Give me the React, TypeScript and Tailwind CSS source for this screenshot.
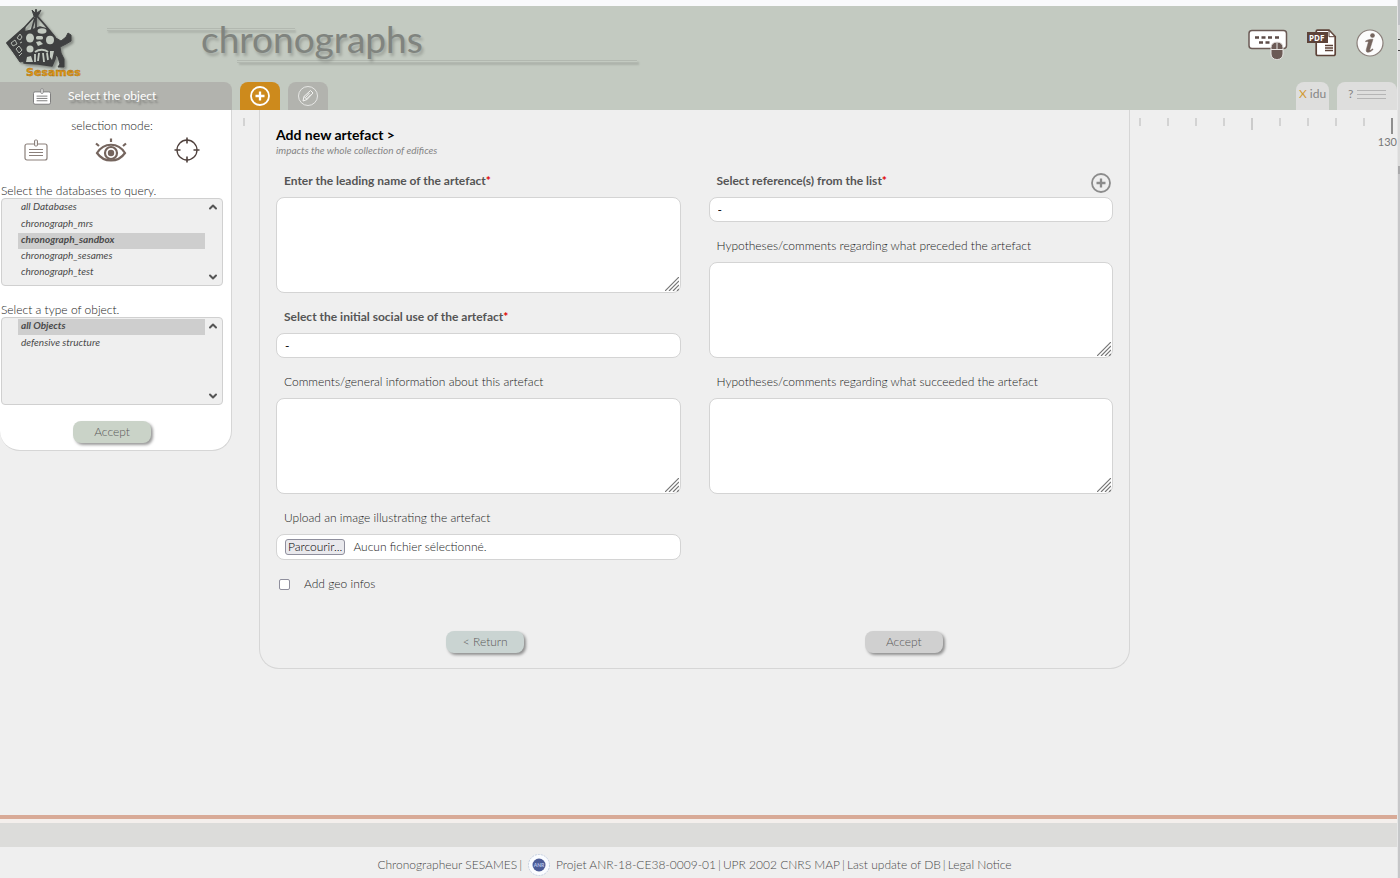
import { useState } from 'react';
import type { ReactNode } from 'react';
import { ChevronDown, ChevronUp } from 'lucide-react';
import clsx from 'clsx';

const DATABASES = [
  'all Databases',
  'chronograph_mrs',
  'chronograph_sandbox',
  'chronograph_sesames',
  'chronograph_test',
];

const OBJECT_TYPES = ['all Objects', 'defensive structure'];

const TICKS = ['minor', 'minor', 'minor', 'minor', 'medium', 'minor', 'minor', 'minor', 'minor', 'major'];

/* ---------- Icons ---------- */

function SesamesLogo() {
  return (
    <svg width="84" height="72" viewBox="0 0 84 72" role="img" aria-label="Sesames">
      <g className="drop-shadow-[2px_2px_1px_rgba(0,0,0,0.3)]" stroke="#3f4041" strokeLinejoin="round">
        {/* knot and tent poles */}
        <path d="M32 2l3 3 1-4 1 4 4-3-2 4-2 3-3-1z" fill="#3f4041" strokeWidth="1" />
        <path d="M35 8L24 20 7 35l14 18M37 8l8 9 9 11M36 8v14M35 10l-4 14" fill="none" strokeWidth="1.800" />
        {/* lattice on the left side */}
        <path d="M25 19l-1 34-4 1L7 35z" fill="#3f4041" strokeWidth="1" />
        {/* stone body */}
        <path d="M24 24l8-2 8-3 7 2 8 8 2 10-2 12-3 7-14-2-14-1z" fill="#3f4041" strokeWidth="1.500" />
        {/* arm and leg */}
        <path
          d="M54 29l7 4 5-4 2-4 3 2v6l-5 3-6 3 1 6 3 6v8h-6l2-3-2-7-6-6z"
          fill="#3f4041"
          strokeWidth="1"
        />
        <g fill="#c3cac1" stroke="none">
          <ellipse cx="42" cy="23" rx="4.500" ry="2.800" />
          <ellipse cx="30" cy="30" rx="4" ry="4.500" />
          <rect x="36" y="28" width="7" height="3.500" rx="1.500" />
          <path d="M36 34l4-1 3 3-5 2z" />
          <ellipse cx="50" cy="32" rx="4" ry="4.200" />
          <ellipse cx="30" cy="41" rx="3.500" ry="3.500" />
          <path d="M26 54l1-5 4-1 2 6zM50 43l4 0-2 9-2-3z" />
        </g>
        <path
          d="M35 44c4-3 10-3 13 0M35 46v8M39 45l-1 8M43 45l1 9M47 45l1 7"
          fill="none"
          stroke="#c3cac1"
          strokeWidth="1.800"
        />
        <path
          d="M11 35l4-3 2 4-4 2zM17 30l3-4 2 3-2 3zM16 41l3-3 3 4-3 3zM19 48l3-3M20 35l2-1"
          fill="none"
          stroke="#b4bab2"
          strokeWidth="1"
        />
      </g>
      <text
        x="26"
        y="68"
        fill="#e09a17"
        stroke="#a8690c"
        strokeWidth="0.4"
        className="font-['DejaVu_Sans'] text-[11px] font-bold"
      >
        Sesames
      </text>
    </svg>
  );
}

function NoteIcon({ className, fill = 'none' }: { className?: string; fill?: string }) {
  return (
    <svg className={className} viewBox="0 0 24 22" fill="none" stroke="currentColor">
      <rect x="1" y="5" width="22" height="16" rx="2" fill={fill} strokeWidth="1.2" />
      <rect x="10.5" y="1" width="3" height="6" rx="1" fill="#efefef" strokeWidth="1" />
      <path d="M5 10.5h14M5 13.5h14M5 16.5h14" strokeWidth="1.2" />
    </svg>
  );
}

function EyeIcon() {
  return (
    <svg className="h-6 w-8" viewBox="0 0 32 24" fill="none" stroke="#75655e" strokeWidth="2.200">
      <path d="M2 15c7-11 21-11 28 0-7 10-21 10-28 0z" />
      <circle cx="16" cy="15" r="6" />
      <circle cx="16" cy="15" r="3.200" fill="#75655e" stroke="none" />
      <path d="M16 4V0.5M4 8L1 5.5M28 8l3-2.5" />
    </svg>
  );
}

function TargetIcon() {
  return (
    <svg className="size-6.5" viewBox="0 0 26 26" fill="none" stroke="#4f413d" strokeWidth="1.3">
      <circle cx="13" cy="13" r="10" />
      <path d="M13 0.5v6M13 19.5v6M0.5 13h6M19.5 13h6" strokeWidth="1.600" />
    </svg>
  );
}

function KeyboardMouseIcon() {
  return (
    <svg width="40" height="31" viewBox="0 0 40 31">
      <rect x="1" y="1.5" width="37.500" height="18" rx="3" fill="#fff" stroke="#6b5a55" strokeWidth="1.5" />
      <path
        d="M7 8.500h4M13.500 8.500h4M20 8.500h4M27 8.500h4M11 13.500h4M17.500 13.500h4"
        stroke="#5d4c48"
        strokeWidth="2.400"
      />
      <rect x="23" y="13" width="12" height="17.500" rx="5.500" fill="#6b5a55" stroke="#e8e6e4" strokeWidth="1" />
      <path d="M23 20.500h12M29 13v7.500" stroke="#e8e6e4" strokeWidth="1" />
    </svg>
  );
}

function PdfIcon() {
  return (
    <svg width="30" height="28" viewBox="0 0 30 28">
      <path
        d="M10.500 1.200H22l6.200 6.500V25a1.500 1.500 0 0 1-1.500 1.500h-16A1.500 1.500 0 0 1 9.200 25V2.500a1.300 1.300 0 0 1 1.300-1.300z"
        fill="#fff"
        stroke="#5d4339"
        strokeWidth="1.700"
      />
      <path d="M22 1.500v6.200h6z" fill="#fff" stroke="#5d4339" strokeWidth="1" />
      <path d="M18 16.500h8M18 19h8M18 21.500h8" stroke="#5d4339" strokeWidth="1.300" />
      <rect x="0" y="3" width="21" height="11" fill="#5d4339" />
      <text x="2" y="11.500" fill="#fff" className="font-['Open_Sans'] text-[8px] font-bold">
        PDF
      </text>
    </svg>
  );
}

function InfoIcon() {
  return (
    <svg width="28" height="28" viewBox="0 0 28 28">
      <circle cx="14" cy="14" r="13" fill="#fcfcfc" stroke="#8a7f7a" strokeWidth="1.200" />
      <circle cx="16.500" cy="6.500" r="2.300" fill="#75655e" />
      <path
        d="M9.500 12c2.500-1.500 5-1.800 7.500-1.800l-3.200 10.300c-.3 1.200.5 1.200 2.700-.7l.6.800c-3 3.200-7.800 3.800-6.800-.2l2-7.200c.2-1-.8-1-2.500-.4z"
        fill="#75655e"
        stroke="#75655e"
        strokeWidth="0.500"
      />
    </svg>
  );
}

function CirclePlus({ className, weight }: { className?: string; weight: number }) {
  return (
    <svg className={className} viewBox="0 0 20 20" fill="none" stroke="currentColor" strokeWidth={weight}>
      <circle cx="10" cy="10" r="9" />
      <path d="M10 5.500v9M5.500 10h9" strokeWidth={weight + 0.5} />
    </svg>
  );
}

function PencilCircle() {
  return (
    <svg className="size-5" viewBox="0 0 20 20" fill="none" stroke="#f4f4f2" strokeWidth="1">
      <circle cx="10" cy="10" r="9.500" strokeWidth="0.800" />
      <path d="M5 15l1-4.500L12.500 4.500l2.500 2.500-6 6.500zM6 10.500l3 3M11.500 7l-4 4.500M13 8.500l-4.500 4.500" />
    </svg>
  );
}

function AnrLogo() {
  return (
    <svg width="22" height="24" viewBox="0 0 22 24" role="img" aria-label="ANR">
      <circle cx="11" cy="12" r="10.500" fill="#fafcff" stroke="#b9c6dc" strokeWidth="0.800" strokeDasharray="2 1" />
      <circle cx="11" cy="12" r="6.500" fill="#4c5c97" />
      <text x="11" y="14" textAnchor="middle" fill="#b9c6ea" className="font-['Lato'] text-[5px] font-bold">
        ANR
      </text>
    </svg>
  );
}

/* ---------- Form parts ---------- */

interface FieldProps {
  id: string;
  label: string;
  required?: boolean;
  children: ReactNode;
}

function Field({ id, label, required, children }: FieldProps) {
  return (
    <div>
      <label
        htmlFor={id}
        className={clsx('block px-2 pt-4 pb-2 leading-4', required && 'font-bold text-[#555]')}
      >
        {label}
        {required && <span className="text-[#e00000]">*</span>}
      </label>
      {children}
    </div>
  );
}

function TextArea({ id }: { id: string }) {
  return (
    <div className="relative">
      <textarea
        id={id}
        className="block h-24 w-full resize-none rounded-lg border border-[#d4d4d4] bg-white px-2 py-1"
      />
      <svg
        className="pointer-events-none absolute right-0.5 bottom-0.5 size-3.5"
        viewBox="0 0 14 14"
        stroke="#777"
        strokeWidth="1.200"
      >
        <path d="M0 14L14 0M4 14L14 4M8 14l6-6M12 14l2-2" />
      </svg>
    </div>
  );
}

function SelectBox({ id }: { id: string }) {
  return (
    <select
      id={id}
      className="block h-[25px] w-full appearance-none rounded-lg border border-[#d4d4d4] bg-white px-2 font-normal text-black"
    >
      <option>-</option>
    </select>
  );
}

interface ListBoxProps {
  id: string;
  label: string;
  options: string[];
  initial: string;
}

function ListBox({ id, label, options, initial }: ListBoxProps) {
  const [value, setValue] = useState(initial);

  return (
    <div>
      <label htmlFor={id} className="block px-px pt-0.5 leading-3.5">
        {label}
      </label>
      <div className="relative mr-2 ml-px text-[#555]">
        <select
          id={id}
          size={5}
          value={value}
          onChange={(e) => setValue(e.target.value)}
          className="block h-22 w-full appearance-none overflow-hidden rounded-sm border border-[#d0d0d0] bg-[#efefef] py-px pr-[17px] pl-4 text-[10px] font-normal italic"
        >
          {options.map((option) => (
            <option
              key={option}
              value={option}
              className={clsx(
                'h-4 min-h-0 px-[3px] py-0 leading-4 [-webkit-text-fill-color:#4a4a4a] first:mb-px',
                option === value && 'font-bold'
              )}
            >
              {option}
            </option>
          ))}
        </select>
        <ChevronUp className="pointer-events-none absolute top-[3px] right-1 size-3" strokeWidth={4} />
        <ChevronDown className="pointer-events-none absolute right-1 bottom-[3px] size-3" strokeWidth={4} />
      </div>
    </div>
  );
}

function PillButton({ children, className }: { children: ReactNode; className: string }) {
  return (
    <button
      type="button"
      className={clsx(
        'h-[22px] w-[78px] rounded-lg text-[#5a5a5a] shadow-[2px_2px_3px_rgba(0,0,0,0.4)]',
        className
      )}
    >
      {children}
    </button>
  );
}

/* ---------- Page sections ---------- */

function Header() {
  return (
    <header className="flex flex-col border-t-[6px] border-[#f9fafc] bg-[#c3cac1] font-normal">
      <div className="flex h-19 items-start">
        <div className="w-[107px] pt-0.5">
          <SesamesLogo />
        </div>
        <div className="relative w-[530px]">
          <span className="absolute top-[22px] left-0 h-[3px] w-[188px] border-y border-[#b2b8b0] shadow-[1px_2px_2px_rgba(0,0,0,0.1)]" />
          <span className="absolute top-[54px] right-0 h-[3px] w-[400px] border-y border-[#b2b8b0] shadow-[2px_2px_2px_rgba(0,0,0,0.12)]" />
          <h1 className="relative pt-[9px] pl-[94px] text-[37px] leading-12 text-[#80847f] [text-shadow:2px_3px_3px_rgba(0,0,0,0.2)]">
            chronographs
          </h1>
        </div>
        <nav className="ml-auto flex items-start gap-[19px] pt-[23px] pr-[13px]">
          <button type="button" aria-label="Keyboard and mouse help">
            <KeyboardMouseIcon />
          </button>
          <button type="button" aria-label="PDF">
            <PdfIcon />
          </button>
          <button type="button" aria-label="Information">
            <InfoIcon />
          </button>
        </nav>
      </div>
      <div className="flex h-7 gap-2">
        <button
          type="button"
          className="flex w-58 items-center rounded-tr-lg bg-[#b2b3ae] pl-8 text-white [text-shadow:2px_3px_2px_rgba(0,0,0,0.3)]"
        >
          <NoteIcon className="mr-4 h-[17px] w-5 text-[#777]" fill="#fff" />
          Select the object
        </button>
        <button
          type="button"
          aria-label="Add"
          className="flex w-10 items-center justify-center rounded-t-lg bg-[#cd8a1c] text-white"
        >
          <CirclePlus className="size-5" weight={1.8} />
        </button>
        <button
          type="button"
          aria-label="Edit"
          className="flex w-10 items-center justify-center rounded-t-lg bg-[#b2b3ae]"
        >
          <PencilCircle />
        </button>
        <button type="button" className="ml-auto w-[33px] rounded-t-lg bg-[#dededd] pb-1 text-[#858585]">
          <span className="text-[#d29a35]">X</span> idu
        </button>
        <button
          type="button"
          aria-label="Help"
          className="flex w-15 items-center gap-1 rounded-t-lg bg-[#dededd] pb-1 pl-[11px] text-[#858585]"
        >
          ?
          <span className="flex h-[9px] w-[29px] flex-col justify-between">
            <span className="h-px bg-[#b5b5b5]" />
            <span className="h-px bg-[#b5b5b5]" />
            <span className="h-px bg-[#b5b5b5]" />
          </span>
        </button>
      </div>
    </header>
  );
}

function Sidebar() {
  return (
    <aside className="w-58 shrink-0 rounded-b-[20px] border-r border-b border-[#d6d6d6] bg-white pt-2 pb-[7px]">
      <p className="pr-[7px] text-center leading-4">selection mode:</p>
      <div className="mt-0.5 flex h-7 items-center justify-between pr-[31px] pl-6">
        <button type="button" aria-label="Select by name">
          <NoteIcon className="h-[22px] w-6 text-[#8b807b]" />
        </button>
        <button type="button" aria-label="Select by view">
          <EyeIcon />
        </button>
        <button type="button" aria-label="Select by position">
          <TargetIcon />
        </button>
      </div>
      <div className="mt-[18px] flex flex-col gap-[15px]">
        <ListBox
          id="databases"
          label="Select the databases to query."
          options={DATABASES}
          initial="chronograph_sandbox"
        />
        <ListBox id="objects" label="Select a type of object." options={OBJECT_TYPES} initial="all Objects" />
      </div>
      <div className="mt-4 pr-[7px] text-center">
        <PillButton className="bg-[#cad3c8]">Accept</PillButton>
      </div>
    </aside>
  );
}

function ArtefactForm() {
  return (
    <form className="min-w-0 flex-1 rounded-b-[20px] border-x border-b border-[#d6d6d6] px-4 pt-4 pb-[15px]">
      <h2 className="text-sm leading-[18px] font-bold text-black">Add new artefact &gt;</h2>
      <p className="text-[10px] leading-[13px] font-normal text-[#858585] italic">
        impacts the whole collection of edifices
      </p>
      <div className="grid grid-cols-2 gap-7">
        <div>
          <Field id="name" label="Enter the leading name of the artefact" required>
            <TextArea id="name" />
          </Field>
          <Field id="social-use" label="Select the initial social use of the artefact" required>
            <SelectBox id="social-use" />
          </Field>
          <Field id="comments" label="Comments/general information about this artefact">
            <TextArea id="comments" />
          </Field>
          <Field id="image" label="Upload an image illustrating the artefact">
            <div className="flex h-[26px] items-center gap-2 rounded-lg border border-[#d4d4d4] bg-white px-2">
              <input id="image" type="file" className="sr-only" />
              <button
                type="button"
                onClick={() => document.getElementById('image')?.click()}
                className="h-4 rounded-[3px] border border-[#8f8f9d] bg-[#e9e9ed] px-0.5 leading-3.5 text-black"
              >
                Parcourir...
              </button>
              <span>Aucun fichier sélectionné.</span>
            </div>
          </Field>
          <div className="mt-4 flex items-center gap-3.5 pl-[3px] leading-4">
            <input
              id="geo"
              type="checkbox"
              className="size-[11px] appearance-none rounded-xs border border-[#8f8f9d] bg-white checked:bg-[#8f8f9d]"
            />
            <label htmlFor="geo">Add geo infos</label>
          </div>
        </div>
        <div>
          <div className="relative">
            <Field id="reference" label="Select reference(s) from the list" required>
              <SelectBox id="reference" />
            </Field>
            <button type="button" aria-label="Add reference" className="absolute top-4 right-0.5 text-[#8c8c8c]">
              <CirclePlus className="size-5" weight={1.8} />
            </button>
          </div>
          <Field id="preceded" label="Hypotheses/comments regarding what preceded the artefact">
            <TextArea id="preceded" />
          </Field>
          <Field id="succeeded" label="Hypotheses/comments regarding what succeeded the artefact">
            <TextArea id="succeeded" />
          </Field>
        </div>
      </div>
      <div className="mt-[39px] flex justify-around">
        <PillButton className="bg-[#cad4d2]">&lt; Return</PillButton>
        <PillButton className="bg-[#d0d0d0]">Accept</PillButton>
      </div>
    </form>
  );
}

function Timeline() {
  return (
    <div className="w-[267px] shrink-0 overflow-hidden pt-2 pl-[9px]">
      <div className="flex h-4 gap-[26px]">
        {TICKS.map((kind, i) => (
          <span
            key={i}
            className={clsx(
              'w-0.5 shrink-0',
              kind === 'minor' && 'h-2 bg-[#d3d3d3]',
              kind === 'medium' && 'h-3 bg-[#cbcbcb]',
              kind === 'major' && 'h-4 bg-[#8e8e8e]'
            )}
          />
        ))}
      </div>
      <p className="text-right text-[11px] leading-4 font-normal text-[#777]">130</p>
    </div>
  );
}

function Footer() {
  return (
    <footer>
      <div className="h-1 bg-[#d8aa97]" />
      <div className="h-1 bg-[#f4efec]" />
      <div className="h-6 bg-[#dcdcda]" />
      <div className="flex h-[31px] items-center justify-center gap-0.5 pt-1 pr-2 text-[#4a4a4a]">
        <span>Chronographeur SESAMES</span>
        <span>|</span>
        <a href="#anr" className="mx-1">
          <AnrLogo />
        </a>
        <a href="#projet">Projet ANR-18-CE38-0009-01</a>
        <span>|</span>
        <a href="#map">UPR 2002 CNRS MAP</a>
        <span>|</span>
        <span>Last update of DB</span>
        <span>|</span>
        <a href="#legal">Legal Notice</a>
      </div>
    </footer>
  );
}

export default function App() {
  return (
    <div className="flex min-h-screen bg-[#efefef] font-['Lato',sans-serif] text-xs font-light text-[#222]">
      <div className="flex min-w-0 flex-1 flex-col">
        <Header />
        <main className="flex flex-1 items-start">
          <Sidebar />
          <div className="w-[27px] shrink-0 pt-2 pl-[11px]">
            <div className="h-2 w-0.5 bg-[#d3d3d3]" />
          </div>
          <ArtefactForm />
          <Timeline />
        </main>
        <Footer />
      </div>
      {/* edge of the window behind */}
      <div className="flex w-[3px] flex-col border-l border-[#e6e6e6] bg-[#c6c6c8]">
        <div className="h-[25px] bg-[#bfc1c5]" />
        <div className="h-3.5 bg-[#dadada]" />
        <div className="h-px bg-[#444]" />
        <div className="h-2.5 bg-[#dadada]" />
        <div className="h-px bg-[#444]" />
        <div className="h-[115px] bg-[#dadada]" />
        <div className="h-2 bg-[#a8a8aa]" />
      </div>
    </div>
  );
}
